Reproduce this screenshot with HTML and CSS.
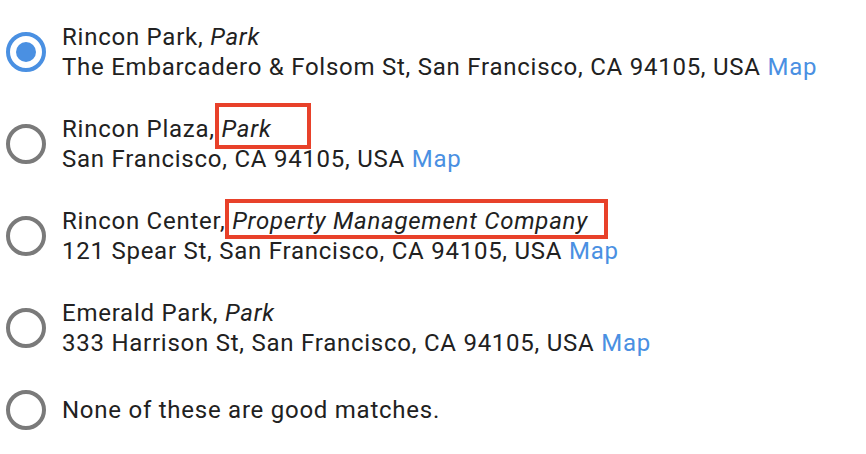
FILE: index.html
```html
<!DOCTYPE html>
<html>
<head>
<meta charset="utf-8">
<link rel="stylesheet" href="styles.css">
</head>
<body>
<ul class="options">
  <li class="option">
    <span class="radio checked"><span class="dot"></span></span>
    <div class="label">
      <div>Rincon Park, <em>Park</em></div>
      <div>The Embarcadero &amp; Folsom St, San Francisco, CA 94105, USA <a class="map">Map</a></div>
    </div>
  </li>
  <li class="option">
    <span class="radio"></span>
    <div class="label">
      <div>Rincon Plaza, <em class="mark"><span class="box box-a"></span>Park</em></div>
      <div>San Francisco, CA 94105, USA <a class="map">Map</a></div>
    </div>
  </li>
  <li class="option">
    <span class="radio"></span>
    <div class="label">
      <div>Rincon Center, <em class="mark"><span class="box box-b"></span>Property Management Company</em></div>
      <div>121 Spear St, San Francisco, CA 94105, USA <a class="map">Map</a></div>
    </div>
  </li>
  <li class="option">
    <span class="radio"></span>
    <div class="label">
      <div>Emerald Park, <em>Park</em></div>
      <div>333 Harrison St, San Francisco, CA 94105, USA <a class="map">Map</a></div>
    </div>
  </li>
  <li class="option">
    <span class="radio"></span>
    <div class="label">
      <div>None of these are good matches.</div>
    </div>
  </li>
</ul>
</body>
</html>
```

FILE: styles.css
```css
html, body {
  margin: 0;
  padding: 0;
  background: #ffffff;
}
body {
  font-family: Roboto, "Liberation Sans", sans-serif;
  font-size: 24px;
  line-height: 30px;
  letter-spacing: 0.75px;
  color: #212121;
}
.options {
  list-style: none;
  margin: 0;
  padding: 22px 0 0 6px;
  display: flex;
  flex-direction: column;
  gap: 32px;
}
.option {
  display: flex;
  align-items: center;
  gap: 16px;
}
.radio {
  box-sizing: border-box;
  width: 40px;
  height: 40px;
  flex: 0 0 40px;
  border-radius: 50%;
  border: 4px solid #7a7a7a;
  display: flex;
  align-items: center;
  justify-content: center;
}
.radio.checked {
  border: 4px solid #4a90e2;
}
.dot {
  width: 20px;
  height: 20px;
  border-radius: 50%;
  background: #4a90e2;
}
.label {
  white-space: nowrap;
}
em {
  font-style: italic;
}
.map {
  color: #4a90e2;
  text-decoration: none;
}
.mark {
  position: relative;
}
.box {
  position: absolute;
  box-sizing: border-box;
  border: 4.5px solid #e8412a;
}
.box-a {
  left: -7px;
  top: -12px;
  width: 96px;
  height: 46px;
}
.box-b {
  left: -7px;
  top: -8px;
  width: 383px;
  height: 40px;
}
```
